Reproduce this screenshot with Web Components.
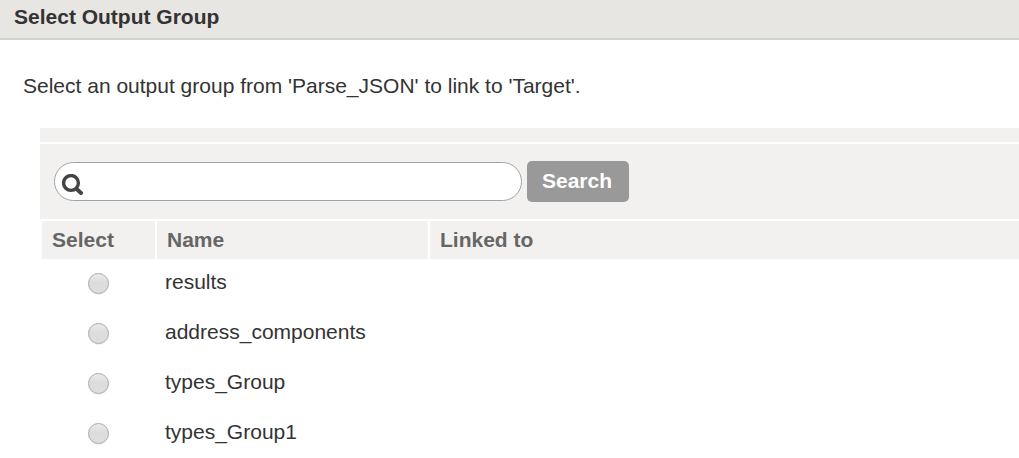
<!DOCTYPE html>
<html lang="en">
<head>
<meta charset="utf-8">
<title>Select Output Group</title>
<style>
  body { margin: 0; background: #fff; color: #333; font: 21px/24px "Liberation Sans", Arial, sans-serif; overflow: hidden; }
</style>
</head>
<body>
<group-dialog>
  <span slot="title">Select Output Group</span>
  <span slot="message">Select an output group from 'Parse_JSON' to link to 'Target'.</span>
  <search-bar></search-bar>
  <group-table groups="results address_components types_Group types_Group1"></group-table>
</group-dialog>

<template id="group-dialog">
  <style>
    :host { display: block; }
    header { padding: 5px 14px 9px; background: #e7e6e2; border-bottom: 2px solid #d2d2d2; }
    h1 { margin: 0; font-size: 21px; line-height: 24px; }
    p { margin: 0; padding: 34px 23px 30px; }
    .panel { margin-left: 40px; }
    .strip { height: 14px; margin-bottom: 2px; background: #f2f1ef; }
  </style>
  <header><h1><slot name="title"></slot></h1></header>
  <main>
    <p><slot name="message"></slot></p>
    <div class="panel">
      <div class="strip"></div>
      <slot></slot>
    </div>
  </main>
</template>

<template id="search-bar">
  <style>
    :host { display: block; background: #f2f1ef; }
    form { display: flex; align-items: center; gap: 5px; padding: 17px 14px; }
    .field { display: flex; align-items: center; box-sizing: border-box; flex: 0 1 468px; height: 39px; padding: 0 14px 0 7px; gap: 6px; background: #fff; border: 1px solid #a3a3a3; border-radius: 20px; }
    svg { flex: none; margin-top: 5px; }
    input { flex: 1; min-width: 0; padding: 0; border: 0; outline: 0; background: transparent; color: inherit; font: inherit; }
    button { box-sizing: border-box; height: 41px; padding: 0 17px 2px 15px; border: 0; border-radius: 5px; background: #999; color: #fff; font: inherit; font-weight: bold; }
  </style>
  <form>
    <div class="field">
      <svg width="21" height="21" viewBox="0 0 21 21" fill="none" stroke="#444" aria-hidden="true">
        <circle cx="9" cy="9" r="7.4" stroke-width="3.4"/>
        <path d="M14 14l1.5 1.5" stroke-width="3.4"/>
        <path d="M15.8 16l3.2 3" stroke-width="4" stroke-linecap="round"/>
      </svg>
      <input type="text" aria-label="Search groups">
    </div>
    <button type="button">Search</button>
  </form>
</template>

<template id="group-table">
  <style>
    :host { display: block; padding: 2px 0 0 2px; }
    table { width: 100%; table-layout: fixed; border-collapse: separate; border-spacing: 0; }
    .select { width: 115px; }
    .name { width: 273px; }
    th, td { box-sizing: border-box; border-right: 2px solid #fff; text-align: left; }
    th:last-child, td:last-child { border-right: 0; }
    th { height: 38px; padding: 0 10px; background: #f2f1ef; color: #666; }
    td { height: 50px; padding: 0 8px 2px; }
    label { display: block; padding-bottom: 2px; }
    input { appearance: none; display: block; width: 21px; height: 21px; margin: 0 auto; border: 1px solid #a9a9a9; border-radius: 50%; background: linear-gradient(#ebebeb, #dcdcdc 45%, #dedede); box-shadow: 0 1px 1px #0001; }
    input:checked { background: radial-gradient(#555 0 4px, #dedede 5px); }
  </style>
  <table>
    <colgroup><col class="select"><col class="name"><col></colgroup>
    <thead><tr><th scope="col">Select</th><th scope="col">Name</th><th scope="col">Linked to</th></tr></thead>
    <tbody></tbody>
  </table>
</template>

<script>
  class TemplateElement extends HTMLElement {
    constructor() {
      super();
      const template = document.getElementById(this.localName);
      this.attachShadow({ mode: "open" }).append(template.content.cloneNode(true));
    }
  }

  class GroupDialog extends TemplateElement {}
  class SearchBar extends TemplateElement {}

  class GroupTable extends TemplateElement {
    connectedCallback() {
      const rows = this.getAttribute("groups").split(" ").map((name, i) => {
        const row = document.createElement("tr");
        row.innerHTML = `<td><input type="radio" name="group" id="group-${i}"></td><td><label for="group-${i}"></label></td><td></td>`;
        row.querySelector("input").value = name;
        row.querySelector("label").textContent = name;
        return row;
      });
      this.shadowRoot.querySelector("tbody").replaceChildren(...rows);
    }
  }

  customElements.define("group-dialog", GroupDialog);
  customElements.define("search-bar", SearchBar);
  customElements.define("group-table", GroupTable);
</script>
</body>
</html>
